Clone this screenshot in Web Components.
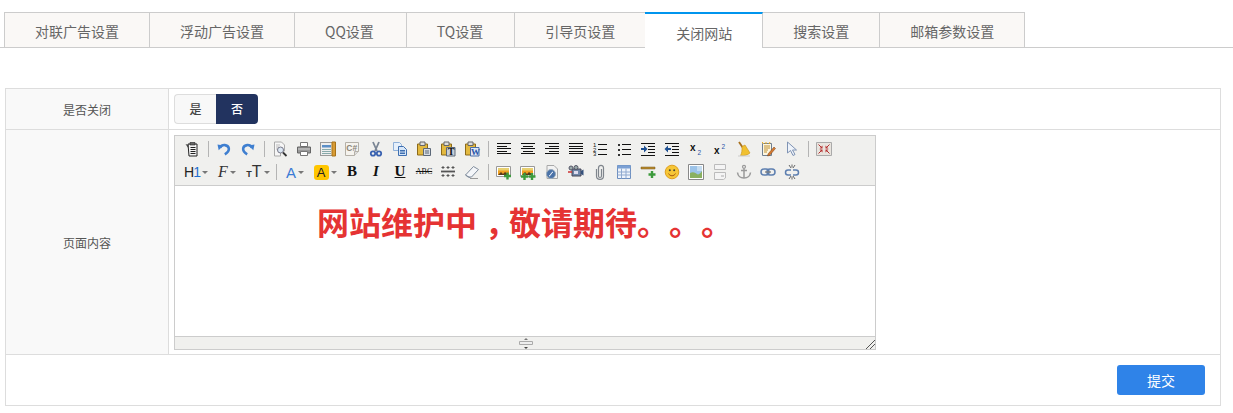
<!DOCTYPE html>
<html lang="zh">
<head>
<meta charset="utf-8">
<title>关闭网站</title>
<style>
  html, body { margin: 0; background: #fff; }
  body { font-family: "Noto Sans CJK SC", "Liberation Sans", sans-serif; color: #555; }
  .mid-comma { margin: 0 8px; font-feature-settings: "halt"; }
</style>
</head>
<body>
<site-tabs>
  <tab-item>对联广告设置</tab-item>
  <tab-item>浮动广告设置</tab-item>
  <tab-item style="--pad-right: 32px">QQ设置</tab-item>
  <tab-item style="--pad-right: 31px">TQ设置</tab-item>
  <tab-item>引导页设置</tab-item>
  <tab-item active>关闭网站</tab-item>
  <tab-item>搜索设置</tab-item>
  <tab-item>邮箱参数设置</tab-item>
</site-tabs>

<form-table>
  <form-row label="是否关闭" height="40">
    <yes-no-toggle></yes-no-toggle>
  </form-row>
  <form-row label="页面内容" height="224">
    <rich-editor>网站维护中<span class="mid-comma">，</span>敬请期待。。。</rich-editor>
  </form-row>
  <form-actions>
    <submit-button>提交</submit-button>
  </form-actions>
</form-table>

<script>
const ICONS = {
  pastetext: `<path d="M4 3h9v12H5z" fill="#f4f4f4" stroke="#222"/><path d="M1.500 3l3 4.500V4z" fill="#444"/><path d="M6 1.500h5v2.500H6z" fill="#666" stroke="#222" stroke-width=".6"/><path d="M6.500 6.500h5M6.500 8.500h5M6.500 10.500h5M6.500 12.500h5" stroke="#222"/>`,
  undo: `<path d="M4 6.500c2-3.500 8-3.200 8.800 .8.400 2.700-1.600 4.700-4 6" fill="none" stroke="#3f7fd0" stroke-width="2.600"/><path d="M1.500 3.500l6 1-4.800 4.700z" fill="#3f7fd0"/>`,
  redo: `<path d="M12 6.500c-2-3.500-8-3.200-8.800 .8-.4 2.700 1.600 4.700 4 6" fill="none" stroke="#3f7fd0" stroke-width="2.600"/><path d="M14.500 3.500l-6 1 4.800 4.700z" fill="#3f7fd0"/>`,
  preview: `<path d="M2.500 1h7l3 3v6h-4v5h-6z" fill="#f6f6f6" stroke="#aaa"/><path d="M4 4h4M4 6h3M4 8h2" stroke="#bbb"/><circle cx="8.500" cy="9" r="3" fill="#dce8f4" stroke="#778"/><path d="M11 11.500l3.500 3.500" stroke="#333" stroke-width="1.800"/>`,
  print: `<path d="M4.500 1.500h7v4h-7z" fill="#fff" stroke="#777"/><path d="M1.500 6h13v6h-13z" fill="#999" stroke="#666"/><path d="M2 8h12" stroke="#ccc"/><path d="M4.500 10.500h7v4h-7z" fill="#fff" stroke="#777"/>`,
  template: `<path d="M.500 1.500h12v13h-12z" fill="#eee" stroke="#444" stroke-dasharray="1 1"/><path d="M2 4h9v2.500H2z" fill="#5b8fc7"/><path d="M2 8.500h9M2 10.500h9M2 12.500h9" stroke="#8aa"/><path d="M12 1h3.500v14H12z" fill="#d89b34" stroke="#a67218"/>`,
  code: `<path d="M1.500 1.500h13v9l-4 4h-9z" fill="#f5f3ee" stroke="#b4b0a8"/><path d="M10.500 14.500v-4h4" fill="#ddd" stroke="#b4b0a8"/><text x="2.300" y="10" font-family="Liberation Sans" font-size="8.500" font-weight="700" fill="#8a8378">C#</text>`,
  cut: `<path d="M5 1l4 9M11 1l-4 9" stroke="#7a8594" stroke-width="1.800"/><circle cx="5" cy="12.500" r="2.200" fill="none" stroke="#3a62b0" stroke-width="1.800"/><circle cx="11" cy="12.500" r="2.200" fill="none" stroke="#3a62b0" stroke-width="1.800"/>`,
  copy: `<path d="M1.500 1.500h6l2 2v6h-8z" fill="#e6f0fb" stroke="#8fb0d8"/><path d="M6.500 5.500h5l3 3v6h-8z" fill="#d6e6f8" stroke="#3f6fb0"/><path d="M8 9.500h5M8 11h5M8 12.500h5" stroke="#3f6fb0"/>`,
  paste: `<path d="M1.500 3h10v11h-10z" fill="#e3b93f" stroke="#8c6a1a"/><path d="M4 1h5v3.500H4z" fill="#ddd" stroke="#666"/><path d="M7.500 7.500h7v7h-7z" fill="#d6dce4" stroke="#5c6878"/><path d="M9 10h4M9 12h4" stroke="#5c6878"/>`,
  pastet: `<path d="M1.500 3h10v11h-10z" fill="#e3b93f" stroke="#8c6a1a"/><path d="M4 1h5v3.500H4z" fill="#ddd" stroke="#666"/><path d="M6.500 6.500h8.500v8.500h-8.500z" fill="#c9cfd8" stroke="#5c6878"/><text x="7.800" y="13.800" font-family="Liberation Serif" font-size="10" font-weight="700" fill="#111">T</text>`,
  pastew: `<path d="M1.500 3h10v11h-10z" fill="#e3b93f" stroke="#8c6a1a"/><path d="M4 1h5v3.500H4z" fill="#ddd" stroke="#666"/><path d="M6.500 6.500h8.500v8.500h-8.500z" fill="#dfe8f5" stroke="#4a6ea8"/><text x="7" y="13.800" font-family="Liberation Serif" font-size="9" font-weight="700" fill="#2a55a8">W</text>`,
  left: lines([[1,15],[1,11],[1,15],[1,11],[1,15]]),
  center: lines([[1,15],[3,13],[1,15],[3,13],[1,15]]),
  right: lines([[1,15],[5,15],[1,15],[5,15],[1,15]]),
  justify: lines([[1,15],[1,15],[1,15],[1,15],[1,15]]),
  ol: `<text x="1" y="6" font-family="Liberation Sans" font-size="6" fill="#111">1</text><text x="1" y="10.500" font-family="Liberation Sans" font-size="6" fill="#111">2</text><text x="1" y="15" font-family="Liberation Sans" font-size="6" fill="#111">3</text><path d="M6 3.500h9M6 8.500h9M6 13.500h9" stroke="#111"/>`,
  ul: `<path d="M2 3h2v2H2zM2 8h2v2H2zM2 13h2v2H2z" fill="#333"/><path d="M6 3.500h9M6 8.500h9M6 13.500h9" stroke="#111"/>`,
  indent: `<path d="M1 2.500h14M8 5.500h7M8 8.500h7M8 11.500h7M1 14.500h14" stroke="#111"/><path d="M1 7h3V4.500L7.500 8 4 11.500V9H1z" fill="#1d4f91"/>`,
  outdent: `<path d="M1 2.500h14M8 5.500h7M8 8.500h7M8 11.500h7M1 14.500h14" stroke="#111"/><path d="M7 7H4V4.500L.5 8 4 11.500V9h3z" fill="#1d4f91"/>`,
  sub: `<text x="2" y="10" font-family="Liberation Sans" font-size="10" font-weight="700" fill="#111">x</text><text x="9.500" y="13.500" font-family="Liberation Sans" font-size="6.500" fill="#2a55a8">2</text>`,
  sup: `<text x="2" y="13" font-family="Liberation Sans" font-size="10" font-weight="700" fill="#111">x</text><text x="9.500" y="8" font-family="Liberation Sans" font-size="6.500" fill="#2a55a8">2</text>`,
  broom: `<path d="M3 1l4 6" stroke="#a8701c" stroke-width="1.800"/><path d="M6 5.500l3-1.500 5 8c-2 2-6 3-9.500 2.500C6 12 6 9 6 5.500z" fill="#f0c030" stroke="#c69018" stroke-width=".6"/><path d="M2 15h12" stroke="#ccc"/>`,
  autotype: `<path d="M2.500 2.500h9v12h-9z" fill="#fdf6e0" stroke="#6f7f90"/><path d="M2 1l2 2M6 1v2M10 1l-1 2" stroke="#f0b020"/><path d="M4 5h6M4 7h6M4 9h4M4 11h3" stroke="#c09030"/><path d="M8 13l6-7 1.500 1.500-6 7-2 .5z" fill="#d87a30" stroke="#704018" stroke-width=".5"/>`,
  cursor: `<path d="M3.500 1v11l3-2.500 2.500 5 2-1-2.500-4.500h4z" fill="#eef3fa" stroke="#7f93b4"/>`,
  fullscreen: `<path d="M.500 1.500h15v13H.500z" fill="#e8e4de" stroke="#aaa"/><path d="M2.500 3.500l3 3M13.500 3.500l-3 3M2.500 12.500l3-3M13.500 12.500l-3-3" stroke="#b53030"/><path d="M6.500 7.500v-3l-3 3zM9.500 7.500v-3l3 3zM6.500 8.500v3l-3-3zM9.500 8.500v3l3-3z" fill="#b53030"/>`,
  grid: `<path d="M1 7.500h14" stroke="#555" stroke-width="1.800"/><path d="M3 2v3M8 2v3M13 2v3M3 10v3M8 10v3M13 10v3" stroke="#555"/><path d="M1.500 3.500h3M6.500 3.500h3M11.500 3.500h3M1.500 11.500h3M6.500 11.500h3M11.500 11.500h3" stroke="#555"/>`,
  eraser: `<path d="M1.500 11l8-8.500 5 3-7 7.500H4z" fill="#f4f6f9" stroke="#7f8c9c"/><path d="M1.500 11l5 3" stroke="#7f8c9c"/><path d="M6 14.500h8" stroke="#999"/>`,
  image: photo() + plus(11.500, 12),
  images: photo() + plus(4.500, 12.500) + plus(12, 12.500),
  flash: `<path d="M3 1.500h7l3.500 3.500v9.500H3z" fill="#f2f2f2" stroke="#a8a8a8"/><circle cx="7" cy="10" r="4.500" fill="#4a72a8" stroke="#9ab"/><path d="M5 12c2 0 2-4 4-4" stroke="#fff" fill="none"/>`,
  video: `<path d="M4 5h9v7H4z" fill="#6f86a8" stroke="#445"/><path d="M13 7l2.500-1.500v6L13 10z" fill="#35507a"/><circle cx="3" cy="4" r="2" fill="#9aa" stroke="#556"/><circle cx="8" cy="3.500" r="2" fill="#9aa" stroke="#556"/><path d="M0 8h4" stroke="#c33" stroke-width="1.500"/><path d="M6 7h4v3H6z" fill="#dde"/>`,
  attach: `<path d="M4.500 5v7c0 4.500 7 4.500 7 0V4c0-3.500-5-3.500-5 0v8c0 2 3 2 3 0V5" fill="none" stroke="#7f858c" stroke-width="1.200"/>`,
  table: `<path d="M1.500 1.500h13v13h-13z" fill="#eef3fb" stroke="#6d8fc0"/><path d="M1.500 1.500h13v3h-13z" fill="#7ba0d4"/><path d="M1.500 8h13M1.500 11h13M5.500 4.500v10M10 4.500v10" stroke="#8fa9cf"/>`,
  hr: `<path d="M1 3h14v2H1z" fill="#b98b2e" stroke="#7a5a18" stroke-width=".5"/>` + plus(12, 10.500),
  smile: `<circle cx="8" cy="8" r="6.800" fill="#f6c636" stroke="#e0a020"/><circle cx="5.800" cy="6.300" r="1" fill="#443"/><circle cx="10.200" cy="6.300" r="1" fill="#443"/><path d="M4.500 9.500c1.500 3 5.500 3 7 0" fill="none" stroke="#a85a10"/>`,
  picture: `<path d="M.500 .500h15v15H.500z" fill="#fff" stroke="#888"/><path d="M2 2h12v12H2z" fill="#9cc3e8"/><path d="M2 14V9c3-2 6 0 7 1s3 0 5-3v7z" fill="#8ab060"/><path d="M9 2h5v5H9z" fill="#c4dcf0"/>`,
  pagebreak: `<path d="M2.500 .500h11v5h-11z" fill="#f4f4f4" stroke="#bbb"/><path d="M2.500 8.500h11v5.500l-2 1.500h-9z" fill="#f4f4f4" stroke="#bbb"/><path d="M9 12h3" stroke="#aaa"/>`,
  anchor: `<circle cx="8" cy="2.800" r="1.500" fill="none" stroke="#999" stroke-width="1.200"/><path d="M8 4.500V14M5 6.500h6" stroke="#999" stroke-width="1.500"/><path d="M1.500 8.500c.5 4 3.500 5.500 6.500 5.500s6-1.500 6.500-5.500" fill="none" stroke="#999" stroke-width="1.500"/>`,
  link: `<rect x="1" y="5" width="8" height="6" rx="3" fill="none" stroke="#5d7fb0" stroke-width="1.500"/><rect x="7" y="5" width="8" height="6" rx="3" fill="none" stroke="#5d7fb0" stroke-width="1.500"/><path d="M5 8h6" stroke="#777" stroke-width="1.200"/>`,
  unlink: `<path d="M7 6H4a2.500 2.500 0 0 0 0 5h3M9 6h3a2.500 2.500 0 0 1 0 5H9" fill="none" stroke="#5d7fb0" stroke-width="1.500"/><path d="M5 1l2 3M11 1L9 4M8 .500v3M5 15l2-3M11 15l-2-3M8 15.500v-3" stroke="#666"/>`
};

function lines(rows) {
  const ys = [2.5, 5.5, 7.5, 10.5, 12.5];
  return `<path d="${rows.map((r, i) => `M${r[0]} ${ys[i]}H${r[1]}`).join('')}" stroke="#111"/>`;
}
function plus(x, y) {
  return `<path d="M${x - 3.5} ${y}h7M${x} ${y - 3.5}v7" stroke="#3c9a3c" stroke-width="2.400"/>`;
}
function photo() {
  return `<path d="M.500 2.500h14v10H.500z" fill="#fff" stroke="#999"/><path d="M2 4h11v7H2z" fill="#f0a020"/><path d="M2 4h11v2.500H2z" fill="#e8d070"/><path d="M2 11l3-3 2 2 2-2 4 3z" fill="#5a3a1a"/>`;
}

class SiteTabs extends HTMLElement {
  constructor() {
    super();
    this.attachShadow({mode: 'open'}).innerHTML = `
      <style>
        :host { display: flex; margin-top: 12px; padding-left: 4px; border-bottom: 1px solid #ccc; height: 35px; }
      </style>
      <slot></slot>`;
  }
}
customElements.define('site-tabs', SiteTabs);

class TabItem extends HTMLElement {
  constructor() {
    super();
    this.attachShadow({mode: 'open'}).innerHTML = `
      <style>
        :host {
          display: block;
          height: 34px;
          line-height: 37px;
          padding: 0 var(--pad-right, 30px) 0 30px;
          font-size: 14px;
          color: #666;
          background: #faf8f6;
          border: 1px solid #ccc;
          border-width: 1px 1px 0 0;
        }
        :host(:first-child) { border-left: 1px solid #ccc; }
        :host([active]) {
          line-height: 39px;
          margin-left: -1px;
          padding-left: 31px;
          background: #fff;
          border-top: 2px solid #0095ee;
          box-sizing: border-box;
          height: 36px;
        }
      </style>
      <slot></slot>`;
  }
}
customElements.define('tab-item', TabItem);

class FormTable extends HTMLElement {
  constructor() {
    super();
    this.attachShadow({mode: 'open'}).innerHTML = `
      <style>
        :host { display: block; width: 1214px; margin: 40px 0 0 5px; border: 1px solid #ddd; border-bottom: 0; }
      </style>
      <slot></slot>`;
  }
}
customElements.define('form-table', FormTable);

class FormRow extends HTMLElement {
  constructor() {
    super();
    this.attachShadow({mode: 'open'}).innerHTML = `
      <style>
        :host { display: flex; border-bottom: 1px solid #ddd; font-size: 12px; }
        .label {
          flex: 0 0 162px;
          display: flex;
          align-items: center;
          justify-content: center;
          background: #f9f9f9;
          border-right: 1px solid #ddd;
          color: #555;
        }
        .body { flex: 1; padding: 5px; }
      </style>
      <div class="label"></div>
      <div class="body"><slot></slot></div>`;
  }
  connectedCallback() {
    this.shadowRoot.querySelector('.label').textContent = this.getAttribute('label');
    this.style.height = this.getAttribute('height') + 'px';
  }
}
customElements.define('form-row', FormRow);

class YesNoToggle extends HTMLElement {
  constructor() {
    super();
    this.attachShadow({mode: 'open'}).innerHTML = `
      <style>
        :host { display: flex; width: 84px; height: 30px; font-size: 12px; font-weight: 500; line-height: 30px; text-align: center; }
        div { flex: none; width: 42px; box-sizing: border-box; }
        .no { background: #22335f; color: #fff; border-radius: 0 4px 4px 0; }
        .yes { background: #f8f8f8; color: #444; border: 1px solid #ddd; border-right: 0; border-radius: 4px 0 0 4px; line-height: 28px; }
      </style>
      <div class="yes">是</div><div class="no">否</div>`;
  }
}
customElements.define('yes-no-toggle', YesNoToggle);

class ToolBtn extends HTMLElement {
  constructor() {
    super();
    this.attachShadow({mode: 'open'}).innerHTML = `
      <style>
        :host { display: flex; align-items: center; justify-content: center; width: 24px; height: 22px; flex: none; color: #222; }
        svg { width: 16px; height: 16px; display: block; overflow: visible; }
        .caret { width: 0; height: 0; margin: 1px 0 0 2px; border: 3px solid transparent; border-top: 3px solid #777; border-bottom: 0; display: none; }
        :host([caret]) .caret { display: block; }
        ::slotted(*) { display: block; }
      </style>
      <span id="icon"></span><slot></slot><span class="caret"></span>`;
  }
  connectedCallback() {
    const name = this.getAttribute('icon');
    const box = this.shadowRoot.getElementById('icon');
    if (name) box.innerHTML = `<svg viewBox="0 0 16 16">${ICONS[name]}</svg>`;
    else box.remove();
    if (this.hasAttribute('w')) this.style.width = this.getAttribute('w') + 'px';
  }
}
customElements.define('tool-btn', ToolBtn);

class ToolSep extends HTMLElement {
  constructor() {
    super();
    this.attachShadow({mode: 'open'}).innerHTML = `
      <style>
        :host { display: flex; justify-content: center; align-items: center; width: 8px; height: 22px; flex: none; }
        i { display: block; width: 1px; height: 16px; background: #b4b4b4; }
      </style>
      <i></i>`;
  }
}
customElements.define('tool-sep', ToolSep);

class RichEditor extends HTMLElement {
  constructor() {
    super();
    const row1 = ['pastetext', '|', 'undo', 'redo', '|', 'preview', 'print', 'template', 'code', 'cut', 'copy', 'paste', 'pastet', 'pastew', '|', 'left', 'center', 'right', 'justify', 'ol', 'ul', 'indent', 'outdent', 'sub', 'sup', 'broom', 'autotype', 'cursor', '|', 'fullscreen'];
    const row2 = ['grid', 'eraser', '|', 'image', 'images', 'flash', 'video', 'attach', 'table', 'hr', 'smile', 'picture', 'pagebreak', 'anchor', 'link', 'unlink'];
    const render = names => names.map(n => n === '|' ? '<tool-sep></tool-sep>' : `<tool-btn icon="${n}"></tool-btn>`).join('');
    this.attachShadow({mode: 'open'}).innerHTML = `
      <style>
        :host { display: block; width: 700px; border: 1px solid #ccc; background: #fff; }
        .toolbar { height: 50px; padding: 2px 0 0 5px; box-sizing: border-box; background: #f0f0ee; border-bottom: 1px solid #ccc; }
        .row { display: flex; height: 23px; }
        .content {
          height: 150px;
          box-sizing: border-box;
          padding-top: 13px;
          text-align: center;
          font-size: 32px;
          line-height: 44px;
          font-weight: 700;
          color: #e53333;
          text-spacing-trim: space-all;
        }
        .status { position: relative; height: 12px; background: #f0f0ee; border-top: 1px solid #ccc; }
        .status svg { position: absolute; display: block; }
        .grip { left: 343px; top: 1px; }
        .corner { right: 0; bottom: 0; }
        .h1 { font: 14px/1 "Liberation Sans", sans-serif; color: #222; letter-spacing: -1px; }
        .h1 b { font-weight: 400; color: #1f6fd0; }
        .f { font: italic 16px/1 "Liberation Serif", serif; color: #333; }
        .tt { font: 16px/1 "Liberation Sans", sans-serif; color: #333; margin-left: 2px; }
        .tt small { font-size: 9px; font-weight: 700; }
        .fore { font: 15px/1 "Liberation Sans", sans-serif; color: #3a7bd5; }
        .back { font: 13px/15px "Liberation Sans", sans-serif; color: #222; background: #ffc600; width: 15px; height: 15px; border-radius: 3px; text-align: center; }
        .fmt { font: 700 15px/1 "Liberation Serif", serif; color: #111; margin-top: -2px; }
        .u { text-decoration: underline; }
        .abc { font: 8px/1 "Liberation Serif", serif; color: #111; text-decoration: line-through; }
      </style>
      <div class="toolbar">
        <div class="row">${render(row1)}</div>
        <div class="row">
          <tool-btn w="32" caret><span class="h1">H<b>1</b></span></tool-btn>
          <tool-btn w="30" caret><span class="f">F</span></tool-btn>
          <tool-btn w="30" caret><span class="tt"><small>T</small>T</span></tool-btn>
          <tool-sep></tool-sep>
          <tool-btn w="30" caret><span class="fore">A</span></tool-btn>
          <tool-btn w="30" caret><span class="back">A</span></tool-btn>
          <tool-btn><span class="fmt">B</span></tool-btn>
          <tool-btn><span class="fmt"><i>I</i></span></tool-btn>
          <tool-btn><span class="fmt u">U</span></tool-btn>
          <tool-btn><span class="abc">ABC</span></tool-btn>
          ${render(row2)}
        </div>
      </div>
      <div class="content"><slot></slot></div>
      <div class="status">
        <svg class="grip" width="16" height="11" viewBox="0 0 16 11"><path d="M8 0l2 2H6z" fill="#777"/><path d="M1.500 3.500h13v3h-13z" fill="#eee" stroke="#aaa"/><path d="M8 11l-2-2h4z" fill="#444"/></svg>
        <svg class="corner" width="9" height="9" viewBox="0 0 9 9"><path d="M0 9l9-9M4 9l5-5" stroke="#555"/></svg>
      </div>`;
  }
}
customElements.define('rich-editor', RichEditor);

class FormActions extends HTMLElement {
  constructor() {
    super();
    this.attachShadow({mode: 'open'}).innerHTML = `
      <style>
        :host { display: flex; justify-content: flex-end; align-items: center; height: 50px; padding-right: 15px; border-bottom: 1px solid #ddd; }
      </style>
      <slot></slot>`;
  }
}
customElements.define('form-actions', FormActions);

class SubmitButton extends HTMLElement {
  constructor() {
    super();
    this.attachShadow({mode: 'open'}).innerHTML = `
      <style>
        :host { display: block; width: 88px; height: 30px; background: #2f83e8; color: #fff; border-radius: 3px; font-size: 14px; line-height: 30px; text-align: center; }
      </style>
      <slot></slot>`;
  }
}
customElements.define('submit-button', SubmitButton);
</script>
</body>
</html>
